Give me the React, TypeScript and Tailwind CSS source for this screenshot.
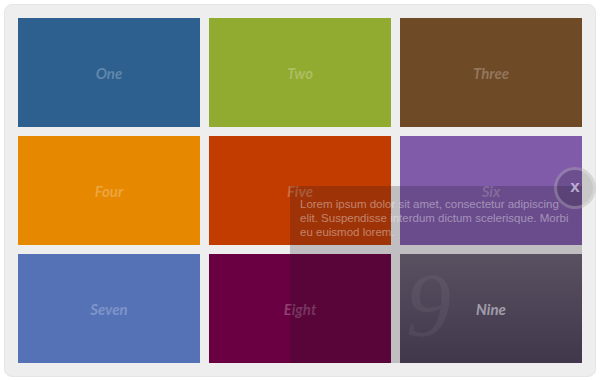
import React from "react";

const tiles = [
  { label: "One", bg: "bg-[#2d5f8f]" },
  { label: "Two", bg: "bg-[#91aa30]" },
  { label: "Three", bg: "bg-[#6f4a27]" },
  { label: "Four", bg: "bg-[#e68800]" },
  { label: "Five", bg: "bg-[#c23c00]" },
  { label: "Six", bg: "bg-[#7f5ba9]" },
  { label: "Seven", bg: "bg-[#5572b6]" },
  { label: "Eight", bg: "bg-[#6a0041]" },
];

export default function App() {
  return (
    <div className="w-[600px] h-[381px] bg-white p-1" style={{ fontFamily: "'Liberation Sans', Arial, sans-serif" }}>
      <div className="relative w-[592px] h-[373px] rounded-lg bg-[#eeeeee] border border-[#e6e6e6] p-[13px] grid grid-cols-[182px_182px_182px] grid-rows-[109px_109px_109px] gap-[9px]">
        {tiles.map((t) => (
          <div key={t.label} className={`${t.bg} flex items-center justify-center`}>
            <span className="text-[15px] font-bold italic text-white/25 mt-[1px]" style={{ fontFamily: "Lato, 'Open Sans', sans-serif" }}>
              {t.label}
            </span>
          </div>
        ))}
        <div className="relative overflow-hidden bg-gradient-to-b from-[#6a6272] to-[#4b4158] flex items-center justify-center">
          <span
            className="absolute left-[6px] top-[7px] text-[90px] leading-none italic text-white/[0.07]"
            style={{ fontFamily: "'Liberation Serif', 'DejaVu Serif', serif" }}
          >
            9
          </span>
          <span className="relative text-[15px] font-bold italic text-[#e4e0ec]/80 mt-[1px]" style={{ fontFamily: "Lato, 'Open Sans', sans-serif" }}>
            Nine
          </span>
        </div>

        <div className="absolute left-[285px] top-[181px] w-[292px] h-[177px] bg-[#1e1923]/[0.22] pl-[10px] pt-[11px]">
          <p className="w-[270px] text-[11.5px] leading-[14px] text-white/40">
            Lorem ipsum dolor sit amet, consectetur adipiscing elit. Suspendisse interdum dictum scelerisque. Morbi eu euismod lorem.
          </p>
        </div>

        <div className="absolute left-[549px] top-[162px] w-[42px] h-[42px] rounded-full border-[3px] border-white/25 bg-[#1e1923]/[0.18] flex items-center justify-center">
          <span className="text-[17px] font-bold text-[#d4c8e8]/80 leading-none mt-[-3px]">x</span>
        </div>
      </div>
    </div>
  );
}
